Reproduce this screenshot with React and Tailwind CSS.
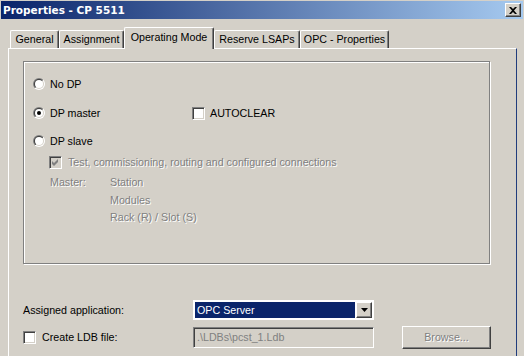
import React from "react";

const raised =
  "border border-t-white border-l-white border-r-[#404040] border-b-[#404040] shadow-[inset_-1px_-1px_0_#808080]";
const sunken =
  "border border-t-[#808080] border-l-[#808080] border-r-white border-b-white shadow-[inset_1px_1px_0_#404040,inset_-1px_-1px_0_#d4d0c8]";
const disabledText = "text-[#808080] [text-shadow:1px_1px_0_#fff]";

function Radio({ checked }) {
  return (
    <span className="w-[12px] h-[12px] rounded-full p-px bg-[linear-gradient(135deg,#808080_50%,#fff_50%)] shrink-0">
      <span className="block w-full h-full rounded-full p-px bg-[linear-gradient(135deg,#404040_50%,#d4d0c8_50%)]">
        <span className="flex w-full h-full rounded-full bg-white items-center justify-center">
          {checked && <span className="w-[4px] h-[4px] rounded-full bg-black" />}
        </span>
      </span>
    </span>
  );
}

function Checkbox({ checked, disabled }) {
  return (
    <span
      className={`w-[13px] h-[13px] shrink-0 flex items-center justify-center ${sunken} ${
        disabled ? "bg-[#d4d0c8]" : "bg-white"
      }`}
    >
      {checked && (
        <svg width="11" height="11" viewBox="0 0 11 11">
          <path d="M2 4 L4 6 L8 2 L8 5 L4 9 L2 7 Z" fill={disabled ? "#808080" : "#000"} />
        </svg>
      )}
    </span>
  );
}

function Tab({ label, width, active }) {
  if (active) {
    return (
      <div
        className="relative z-10 -mb-px h-[22px] flex justify-center pt-[3px] bg-[#d4d0c8] rounded-t-[2px] border-t border-l border-r border-t-white border-l-white border-r-[#404040] shadow-[inset_-1px_0_0_#808080]"
        style={{ width }}
      >
        {label}
      </div>
    );
  }
  return (
    <div
      className="h-[18px] flex justify-center pt-[2px] rounded-t-[2px] border-t border-l border-r border-t-white border-l-white border-r-[#404040] shadow-[inset_-1px_0_0_#808080]"
      style={{ width }}
    >
      {label}
    </div>
  );
}

export default function App() {
  return (
    <div className="w-[524px] h-[356px] bg-[#d4d0c8] overflow-hidden font-['Liberation_Sans',Arial,sans-serif] text-[10.7px] leading-[13px] text-black">
      {/* Title bar */}
      <div className="border-t border-[#d4d0c8]">
        <div className="h-[18px] mx-px flex items-center justify-between bg-[linear-gradient(90deg,#0a246a,#a6caf0)] pl-[2px] pr-[2px]">
          <span className="text-white font-bold text-[10.5px] font-['DejaVu_Sans',sans-serif]">Properties - CP 5511</span>
          <span className={`w-[16px] h-[14px] bg-[#d4d0c8] flex items-center justify-center ${raised}`}>
            <svg width="8" height="7" viewBox="0 0 8 7">
              <path d="M0 0 L2 0 L4 2 L6 0 L8 0 L5 3.5 L8 7 L6 7 L4 5 L2 7 L0 7 L3 3.5 Z" fill="#000" />
            </svg>
          </span>
        </div>
      </div>

      {/* Tabs */}
      <div className="mt-[8px] h-[21px] pl-[10px] flex items-end">
        <Tab label="General" width={49} />
        <Tab label="Assignment" width={65} />
        <Tab label="Operating Mode" width={90} active />
        <Tab label="Reserve LSAPs" width={86} />
        <Tab label="OPC - Properties" width={89} />
      </div>

      {/* Panel */}
      <div className="ml-[8px] w-[509px] h-[320px] border-l border-t border-r border-l-white border-t-white border-r-[#203c7c]">
        <div className="pl-[14px] pt-[12px] flex flex-col">
          {/* Group box */}
          <div className="w-[467px] h-[203px] border border-[#808080] shadow-[1px_1px_0_#fff,inset_1px_1px_0_#fff] pl-[9px] pt-[14px] flex flex-col">
            <div className="h-[16px] flex items-center gap-[5px]">
              <Radio />
              <span>No DP</span>
            </div>
            <div className="mt-[13px] h-[16px] flex items-center">
              <div className="w-[159px] flex items-center gap-[5px]">
                <Radio checked />
                <span>DP master</span>
              </div>
              <Checkbox />
              <span className="ml-[5px]">AUTOCLEAR</span>
            </div>
            <div className="mt-[12px] h-[16px] flex items-center gap-[5px]">
              <Radio />
              <span>DP slave</span>
            </div>
            <div className="mt-[5px] ml-[16px] h-[16px] flex items-center gap-[6px]">
              <Checkbox checked disabled />
              <span className={disabledText}>
                Test, commissioning, routing and configured connections
              </span>
            </div>
            <div className={`mt-[4px] ml-[17px] flex flex-col ${disabledText}`}>
              <div className="h-[16px] flex items-center">
                <span className="w-[60px]">Master:</span>
                <span>Station</span>
              </div>
              <div className="mt-[2px] h-[16px] flex items-center pl-[60px]">Modules</div>
              <div className="mt-[1px] h-[16px] flex items-center pl-[60px]">Rack (R) / Slot (S)</div>
            </div>
          </div>

          {/* Assigned application */}
          <div className="mt-[36px] h-[20px] flex items-center">
            <span className="w-[170px]">Assigned application:</span>
            <div className="w-[181px] h-[20px] bg-white flex p-[2px] gap-px">
              <div className="flex-1 bg-[#0a246a] text-white flex items-center pl-[2px]">OPC Server</div>
              <div className={`w-[16px] bg-[#d4d0c8] flex items-center justify-center ${raised}`}>
                <svg width="7" height="4" viewBox="0 0 7 4">
                  <path d="M0 0 L7 0 L3.5 4 Z" fill="#000" />
                </svg>
              </div>
            </div>
          </div>

          {/* Create LDB file */}
          <div className="mt-[6px] h-[22px] flex items-center">
            <div className="w-[170px] flex items-center gap-[6px]">
              <Checkbox />
              <span>Create LDB file:</span>
            </div>
            <div className={`w-[181px] h-[21px] flex items-center pl-[3px] bg-[#d4d0c8] text-[#808080] ${sunken}`}>
              .\LDBs\pcst_1.Ldb
            </div>
            <div
              className={`ml-[28px] w-[89px] h-[23px] flex items-center justify-center ${raised} ${disabledText}`}
            >
              Browse...
            </div>
          </div>
        </div>
      </div>
    </div>
  );
}
